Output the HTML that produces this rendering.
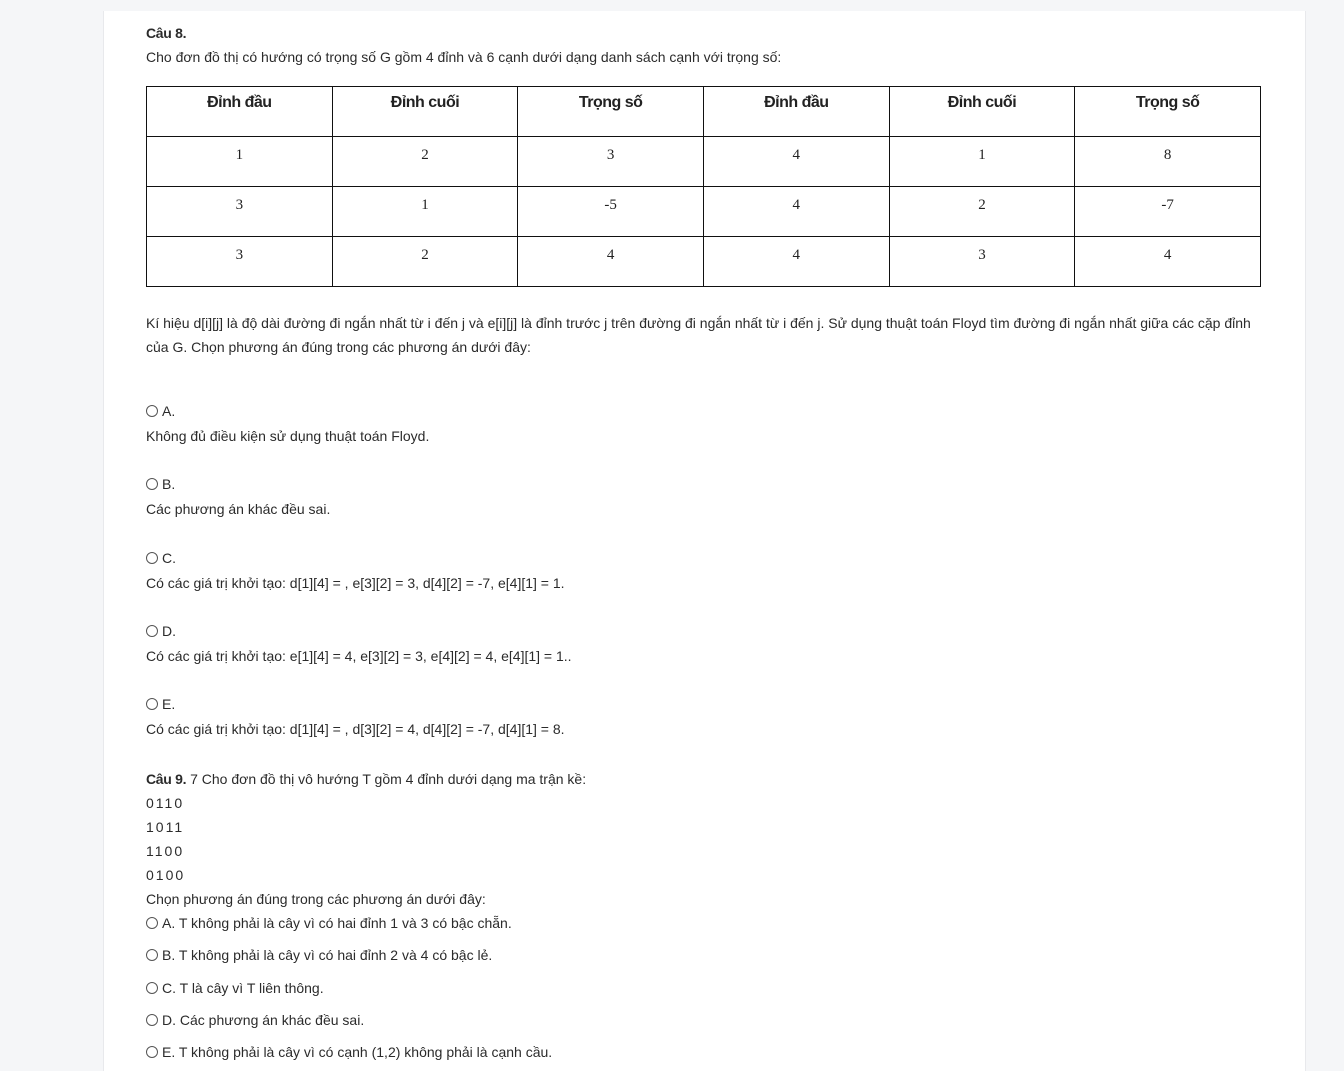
<!DOCTYPE html>
<html><head><meta charset="utf-8"><style>
body{margin:0;width:1344px;height:1064px;background:#f5f6f8;font-family:"Liberation Sans",sans-serif;color:#2b2b2b;overflow:hidden;position:relative}
.panel{position:absolute;left:103px;top:11px;width:1201px;height:1060px;background:#fff;border-left:1px solid #e8e9ec;border-right:1px solid #e8e9ec}
.t{position:absolute;left:146px;font-size:14px;white-space:nowrap;line-height:18px}
table{position:absolute;left:146px;top:86px;border-collapse:collapse;width:1115px;table-layout:fixed}
tr{height:50px}
td,th{border:1.5px solid #111;box-sizing:border-box;height:50px;vertical-align:top;text-align:center;padding:7px 0 0;line-height:18px}
th{font-size:16px;font-weight:bold;letter-spacing:-0.5px;color:#222;padding-top:7px}
td{font-family:"Liberation Serif",serif;font-size:15px;color:#222;padding-top:9px}
.r{display:inline-block;width:12px;height:12px;border:1px solid #555;border-radius:50%;vertical-align:-1px;margin-right:4px;box-sizing:border-box}
</style></head><body>
<div class="panel"></div>
<div class="t" style="top:24px;font-weight:bold;letter-spacing:-0.3px">Câu 8.</div>
<div class="t" style="top:48px">Cho đơn đồ thị có hướng có trọng số G gồm 4 đỉnh và 6 cạnh dưới dạng danh sách cạnh với trọng số:</div>
<table>
<tr><th>Đỉnh đầu</th><th>Đỉnh cuối</th><th>Trọng số</th><th>Đỉnh đầu</th><th>Đỉnh cuối</th><th>Trọng số</th></tr>
<tr><td>1</td><td>2</td><td>3</td><td>4</td><td>1</td><td>8</td></tr>
<tr><td>3</td><td>1</td><td>-5</td><td>4</td><td>2</td><td>-7</td></tr>
<tr><td>3</td><td>2</td><td>4</td><td>4</td><td>3</td><td>4</td></tr>
</table>
<div class="t" style="top:314px">Kí hiệu d[i][j] là độ dài đường đi ngắn nhất từ i đến j và e[i][j] là đỉnh trước j trên đường đi ngắn nhất từ i đến j. Sử dụng thuật toán Floyd tìm đường đi ngắn nhất giữa các cặp đỉnh</div>
<div class="t" style="top:338px">của G. Chọn phương án đúng trong các phương án dưới đây:</div>
<div class="t" style="top:402px"><span class="r"></span>A.</div>
<div class="t" style="top:427px">Không đủ điều kiện sử dụng thuật toán Floyd.</div>
<div class="t" style="top:475px"><span class="r"></span>B.</div>
<div class="t" style="top:500px">Các phương án khác đều sai.</div>
<div class="t" style="top:549px"><span class="r"></span>C.</div>
<div class="t" style="top:574px">Có các giá trị khởi tạo: d[1][4] = , e[3][2] = 3, d[4][2] = -7, e[4][1] = 1.</div>
<div class="t" style="top:622px"><span class="r"></span>D.</div>
<div class="t" style="top:647px">Có các giá trị khởi tạo: e[1][4] = 4, e[3][2] = 3, e[4][2] = 4, e[4][1] = 1..</div>
<div class="t" style="top:695px"><span class="r"></span>E.</div>
<div class="t" style="top:720px">Có các giá trị khởi tạo: d[1][4] = , d[3][2] = 4, d[4][2] = -7, d[4][1] = 8.</div>
<div class="t" style="top:770px"><b style="letter-spacing:-0.3px">Câu 9.</b> 7 Cho đơn đồ thị vô hướng T gồm 4 đỉnh dưới dạng ma trận kề:</div>
<div class="t" style="top:794px;letter-spacing:2px">0110</div>
<div class="t" style="top:818px;letter-spacing:2px">1011</div>
<div class="t" style="top:842px;letter-spacing:2px">1100</div>
<div class="t" style="top:866px;letter-spacing:2px">0100</div>
<div class="t" style="top:890px">Chọn phương án đúng trong các phương án dưới đây:</div>
<div class="t" style="top:914px"><span class="r"></span>A. T không phải là cây vì có hai đỉnh 1 và 3 có bậc chẵn.</div>
<div class="t" style="top:946px"><span class="r"></span>B. T không phải là cây vì có hai đỉnh 2 và 4 có bậc lẻ.</div>
<div class="t" style="top:979px"><span class="r"></span>C. T là cây vì T liên thông.</div>
<div class="t" style="top:1011px"><span class="r"></span>D. Các phương án khác đều sai.</div>
<div class="t" style="top:1043px"><span class="r"></span>E. T không phải là cây vì có cạnh (1,2) không phải là cạnh cầu.</div>
</body></html>
